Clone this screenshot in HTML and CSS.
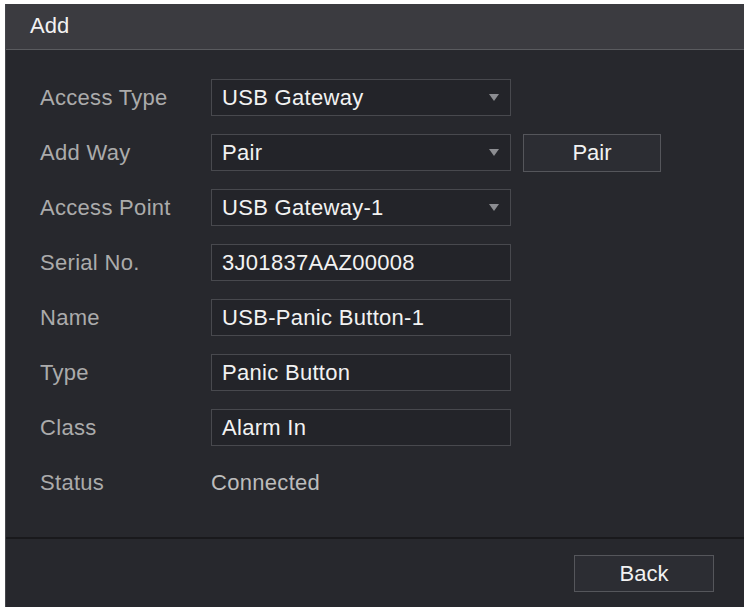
FILE: index.html
```html
<!DOCTYPE html>
<html lang="en">
<head>
  <meta charset="UTF-8">
  <meta name="viewport" content="width=device-width, initial-scale=1.0">
  <title>Add</title>
  <link rel="stylesheet" href="styles.css">
</head>
<body>
  <div class="dialog">
    <div class="dialog-header">Add</div>

    <div class="dialog-body">
      <div class="row">
        <span class="label">Access Type</span>
        <div class="field select">USB Gateway</div>
      </div>
      <div class="row">
        <span class="label">Add Way</span>
        <div class="field select">Pair</div>
        <button class="btn btn-pair">Pair</button>
      </div>
      <div class="row">
        <span class="label">Access Point</span>
        <div class="field select">USB Gateway-1</div>
      </div>
      <div class="row">
        <span class="label">Serial No.</span>
        <div class="field">3J01837AAZ00008</div>
      </div>
      <div class="row">
        <span class="label">Name</span>
        <div class="field">USB-Panic Button-1</div>
      </div>
      <div class="row">
        <span class="label">Type</span>
        <div class="field">Panic Button</div>
      </div>
      <div class="row">
        <span class="label">Class</span>
        <div class="field">Alarm In</div>
      </div>
      <div class="row">
        <span class="label">Status</span>
        <span class="status">Connected</span>
      </div>
    </div>

    <div class="dialog-footer">
      <button class="btn btn-back">Back</button>
    </div>
  </div>
</body>
</html>
```

FILE: styles.css
```css
body {
  margin: 0;
  padding: 4px 4px 2px 5px;
  background: #ffffff;
  font-family: 'Liberation Sans', Arial, sans-serif;
}

.dialog {
  width: 739px;
  background: #27282d;
  border-left: 1px solid #45464b;
  box-sizing: border-box;
}

.dialog-header {
  height: 46px;
  box-sizing: border-box;
  padding: 9px 0 0 24px;
  background: #3b3b40;
  border-bottom: 1px solid #5a5b5f;
  color: #f2f2f2;
  font-size: 22px;
}

.dialog-body {
  display: flex;
  flex-direction: column;
  gap: 18px;
  padding: 29px 0 36px 34px;
}

.row {
  display: flex;
  align-items: center;
  height: 37px;
}

.label {
  width: 171px;
  color: #ababab;
  font-size: 22px;
  letter-spacing: 0.3px;
}

.field {
  width: 300px;
  height: 37px;
  box-sizing: border-box;
  padding: 5px 0 0 10px;
  background: #232429;
  border: 1px solid #48494e;
  color: #f2f2f2;
  font-size: 22px;
  letter-spacing: 0.3px;
  position: relative;
}

.select::after {
  content: '';
  position: absolute;
  right: 11px;
  top: 14px;
  border-left: 5px solid transparent;
  border-right: 5px solid transparent;
  border-top: 7px solid #8c8d91;
}

.status {
  color: #bcbcbc;
  font-size: 22px;
  letter-spacing: 0.3px;
}

.btn {
  height: 38px;
  background: #2c2d33;
  border: 1px solid #55565b;
  color: #f2f2f2;
  font-family: inherit;
  font-size: 22px;
  padding: 0;
}

.btn-pair {
  width: 138px;
  margin-left: 12px;
}

.dialog-footer {
  display: flex;
  justify-content: flex-end;
  height: 70px;
  box-sizing: border-box;
  padding: 16px 30px 0 0;
  border-top: 2px solid #19191c;
}

.btn-back {
  width: 140px;
  height: 37px;
}
```
